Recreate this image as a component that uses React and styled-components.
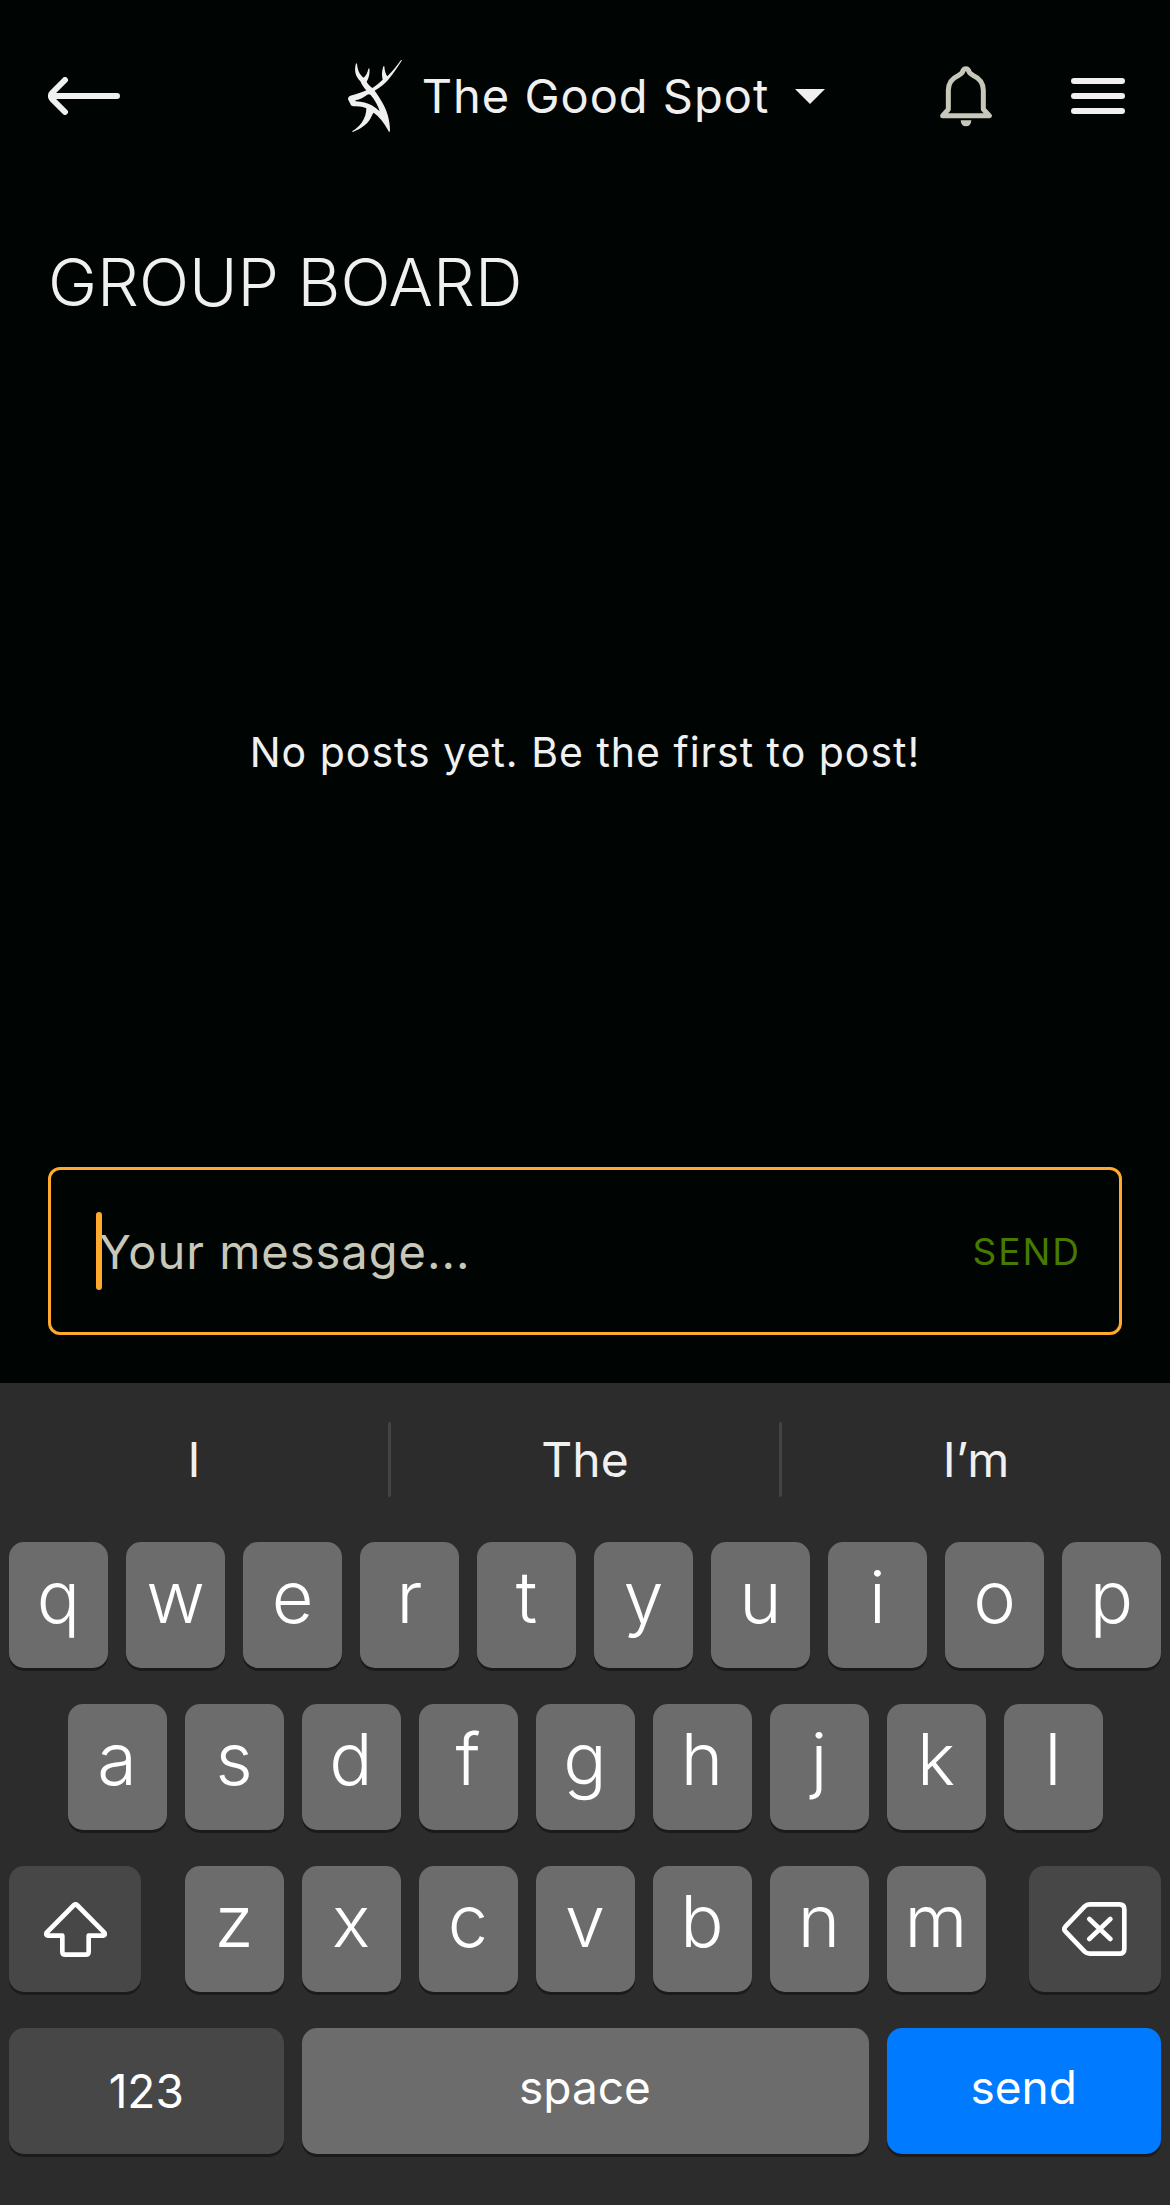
import { useState } from "react";
import styled, { createGlobalStyle, css } from "styled-components";

const GlobalStyle = createGlobalStyle`
  * {
    box-sizing: border-box;
    margin: 0;
    padding: 0;
  }

  body {
    background-color: #000503;
    color: #f0f0f0;
    font-family: Inter, "Liberation Sans", sans-serif;
  }

  button,
  input {
    border: none;
    background: none;
    color: inherit;
    font-family: inherit;
  }

  button {
    cursor: pointer;
  }

  svg {
    display: block;
  }
`;

const Screen = styled.div`
  display: flex;
  flex-direction: column;
  min-height: 100vh;
`;
const Header = styled.header`
  display: grid;
  grid-template-columns: 1fr auto 1fr;
  align-items: center;
  height: 192px;
  padding: 0 45px 0 48px;
`;
const BackButton = styled.button`
  justify-self: start;
`;
const HeaderActions = styled.div`
  display: flex;
  align-items: center;
  justify-content: flex-end;
  gap: 79px;
`;
const GroupButton = styled.button`
  display: flex;
  align-items: center;
  font-size: 47px;
  line-height: 74px;
  letter-spacing: 1px;
`;
const GroupName = styled.span`
  margin: 0 26px 0 20px;
`;
const Board = styled.main`
  flex: 1;
  display: flex;
  flex-direction: column;
  padding: 48px;
`;
const Title = styled.h1`
  font-size: 66px;
  line-height: 84px;
  font-weight: 300;
`;
const Empty = styled.p`
  flex: 1;
  display: flex;
  align-items: center;
  justify-content: center;
  padding-top: 12px;
  font-size: 41px;
  letter-spacing: 1px;
`;
const Composer = styled.form`
  display: flex;
  align-items: center;
  height: 168px;
  padding: 0 38px 0 45px;
  border: 3px solid #ffa92e;
  border-radius: 12px;
`;
const Field = styled.div`
  position: relative;
  flex: 1;
  min-width: 0;
`;
const FieldInput = styled.input`
  width: 100%;
  height: 78px;
  padding-left: 3px;
  font-size: 47px;
  letter-spacing: 1px;
  outline: none;
  caret-color: transparent;

  &::placeholder {
    color: #c7c8ba;
    opacity: 1;
  }
`;
const Caret = styled.span`
  position: absolute;
  top: 0;
  left: 0;
  width: 6px;
  height: 78px;
  border-radius: 3px;
  background-color: #ffa92e;
`;
const SendButton = styled.button`
  color: #477a00;
  font-size: 37px;
  letter-spacing: 2px;
`;

const Keyboard = styled.section`
  padding-bottom: 51px;
  background-color: #2b2c2b;
`;
const Suggestions = styled.div`
  display: grid;
  grid-template-columns: 1fr 3px 1fr 3px 1fr;
  padding: 39px 0 45px;
`;
const Suggestion = styled.button`
  font-size: 48px;
  line-height: 75px;
`;
const Divider = styled.span`
  border-radius: 2px;
  background-color: #434443;
`;
const Keys = styled.div`
  display: flex;
  flex-direction: column;
  gap: 36px;
`;
const KeyRow = styled.div`
  display: grid;
  grid-template-columns: repeat(20, minmax(0, 1fr));
`;
const KeyCell = styled.div`
  display: flex;
  grid-column: ${(props) => props.$start || "auto"} / span
    ${(props) => props.$span || 2};
  justify-content: ${(props) => props.$align || "stretch"};
  padding: 0 9px;
`;
const Key = styled.button`
  display: flex;
  align-items: center;
  justify-content: center;
  width: 100%;
  height: 126px;
  padding-bottom: 18px;
  border-radius: 15px;
  box-shadow: 0 3px 0 #1b1b1b;
  background-color: #6b6c6b;
  color: #ffffff;
  font-size: 72px;
  font-weight: 300;

  ${(props) =>
    props.$kind === "word" &&
    css`
      padding-bottom: 8px;
      font-size: 46px;
      font-weight: 400;
    `}

  ${(props) =>
    props.$kind === "dark" &&
    css`
      padding-bottom: 0;
      background-color: #464746;
      font-size: 46px;
      font-weight: 400;
    `}

  ${(props) =>
    props.$kind === "action" &&
    css`
      padding-bottom: 8px;
      background-color: #007aff;
      font-size: 46px;
      font-weight: 400;
    `}

  ${(props) =>
    props.$narrow &&
    css`
      width: 84%;
    `}
`;

const topRow = "qwertyuiop".split("");
const middleRow = "asdfghjkl".split("");
const bottomRow = "zxcvbnm".split("");

function BackIcon() {
  return (
    <svg width="72" height="38" viewBox="0 0 72 38" fill="none">
      <path
        d="M17 3 4.500 15.500Q1.500 19 4.500 22.500L17 35M4 19H69"
        stroke="#f0f0f0"
        strokeWidth="6"
        strokeLinecap="round"
        strokeLinejoin="round"
      />
    </svg>
  );
}

function DeerLogo() {
  return (
    <svg width="54" height="72" viewBox="48 45 162 216" fill="#f0f0f0">
      <path
        fillRule="evenodd"
        d="M72 55C66 76 69 94 86 110C90 120 96 128 103 136C90 142 74 147 60 151C51 153 46 158 49 165L57 181C61 185 67 184 73 184C84 184 95 186 103 190C103 204 99 219 89 233C80 245 70 252 60 259L63 261C83 253 101 242 112 226C118 217 120 209 125 203C140 214 154 229 171 261L174 259C174 224 165 197 150 171C143 158 135 146 128 137C146 127 160 115 168 105C184 87 196 68 210 46L207 45C195 62 181 80 166 94C160 86 158 77 157 64L154 64C149 80 149 92 152 104C141 115 130 123 121 129C113 122 106 116 104 110C111 98 114 86 112 70L109 71C107 83 102 92 95 98C82 88 77 76 75 56ZM106 149C96 157 84 163 70 166L71 169C91 170 106 174 119 181C129 187 136 193 143 199C139 183 128 164 116 150Q111 146 106 149Z"
      />
    </svg>
  );
}

function BellIcon() {
  return (
    <svg width="52" height="61" viewBox="120 77 156 183" fill="none">
      <path
        d="M128 226 145 207V150C145 130 156 114 174 106C184 101 188 98 189 91Q192 85 197.500 85T206 91C207 98 211 101 221 106C239 114 250 130 250 150V207L268 226Z"
        stroke="#c7c8ba"
        strokeWidth="15"
        strokeLinejoin="round"
      />
      <path d="M182 240H214Q213 258 198 258T182 240Z" fill="#c7c8ba" />
    </svg>
  );
}

function MenuIcon() {
  return (
    <svg width="54" height="36" viewBox="0 0 54 36">
      <path
        d="M3 3H51M3 18H51M3 33H51"
        stroke="#f0f0f0"
        strokeWidth="6"
        strokeLinecap="round"
      />
    </svg>
  );
}

function ShiftIcon() {
  return (
    <svg width="63" height="55" viewBox="129 183 189 165" fill="none">
      <path
        d="M219 192 137 275Q133 283 141 284H184V332Q184 341 193 341H254Q263 341 263 332V284H306Q314 283 310 275L228 192Q223.500 188 219 192Z"
        stroke="#ffffff"
        strokeWidth="14"
        strokeLinejoin="round"
      />
    </svg>
  );
}

function DeleteIcon() {
  return (
    <svg width="65" height="54" viewBox="846 186 195 162" fill="none">
      <path
        d="M929 193H1018Q1033 193 1033 208V326Q1033 341 1018 341H929Q920 341 914 335L856 274Q850 267 856 260L914 199Q920 193 929 193ZM928 237 991 297M991 237 928 297"
        stroke="#ffffff"
        strokeWidth="14"
        strokeLinecap="round"
        strokeLinejoin="round"
      />
    </svg>
  );
}

export default function App() {
  const [message, setMessage] = useState("");

  function handleType(text) {
    setMessage((current) => current + text);
  }

  function handleSend(e) {
    e.preventDefault();
    setMessage("");
  }

  return (
    <>
      <GlobalStyle />
      <Screen>
        <Header>
          <BackButton aria-label="Back">
            <BackIcon />
          </BackButton>
          <GroupButton>
            <DeerLogo />
            <GroupName>The Good Spot</GroupName>
            <svg width="30" height="15" viewBox="0 0 30 15" fill="#f0f0f0">
              <path d="M0 0H30L15 15Z" />
            </svg>
          </GroupButton>
          <HeaderActions>
            <button aria-label="Notifications">
              <BellIcon />
            </button>
            <button aria-label="Menu">
              <MenuIcon />
            </button>
          </HeaderActions>
        </Header>

        <Board>
          <Title>GROUP BOARD</Title>
          <Empty>No posts yet. Be the first to post!</Empty>
          <Composer onSubmit={handleSend}>
            <Field>
              <FieldInput
                type="text"
                aria-label="Your message"
                placeholder="Your message..."
                value={message}
                onChange={(e) => setMessage(e.target.value)}
              />
              {message === "" && <Caret />}
            </Field>
            <SendButton type="submit">SEND</SendButton>
          </Composer>
        </Board>

        <Keyboard>
          <Suggestions>
            <Suggestion onClick={() => handleType("I ")}>I</Suggestion>
            <Divider />
            <Suggestion onClick={() => handleType("The ")}>The</Suggestion>
            <Divider />
            <Suggestion onClick={() => handleType("I’m ")}>I’m</Suggestion>
          </Suggestions>
          <Keys>
            <KeyRow>
              {topRow.map((letter) => (
                <KeyCell key={letter}>
                  <Key onClick={() => handleType(letter)}>{letter}</Key>
                </KeyCell>
              ))}
            </KeyRow>
            <KeyRow>
              {middleRow.map((letter, i) => (
                <KeyCell key={letter} $start={2 + i * 2}>
                  <Key onClick={() => handleType(letter)}>{letter}</Key>
                </KeyCell>
              ))}
            </KeyRow>
            <KeyRow>
              <KeyCell $span={3}>
                <Key $kind="dark" $narrow aria-label="Shift">
                  <ShiftIcon />
                </Key>
              </KeyCell>
              {bottomRow.map((letter) => (
                <KeyCell key={letter}>
                  <Key onClick={() => handleType(letter)}>{letter}</Key>
                </KeyCell>
              ))}
              <KeyCell $span={3} $align="flex-end">
                <Key
                  $kind="dark"
                  $narrow
                  aria-label="Delete"
                  onClick={() => setMessage((current) => current.slice(0, -1))}
                >
                  <DeleteIcon />
                </Key>
              </KeyCell>
            </KeyRow>
            <KeyRow>
              <KeyCell $span={5}>
                <Key $kind="dark">123</Key>
              </KeyCell>
              <KeyCell $span={10}>
                <Key $kind="word" onClick={() => handleType(" ")}>
                  space
                </Key>
              </KeyCell>
              <KeyCell $span={5}>
                <Key $kind="action" onClick={handleSend}>
                  send
                </Key>
              </KeyCell>
            </KeyRow>
          </Keys>
        </Keyboard>
      </Screen>
    </>
  );
}
